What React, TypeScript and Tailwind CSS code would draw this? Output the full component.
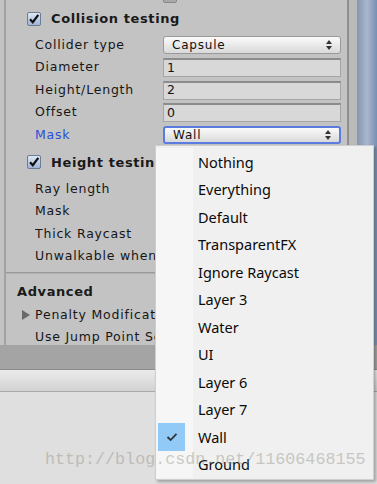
import React from "react";

const UI = { fontFamily: '"DejaVu Sans", Verdana, sans-serif' };

function Arrows() {
  return (
    <svg width="6" height="10" viewBox="0 0 6 10" className="shrink-0">
      <polygon points="3,0 6,4 0,4" fill="#333" />
      <polygon points="0,6 6,6 3,10" fill="#333" />
    </svg>
  );
}

function Check() {
  return (
    <div className="w-[14px] h-[14px] shrink-0 rounded-[2px] border border-[#6d7c96] bg-gradient-to-b from-[#dfe8f6] to-[#9fb3d6] flex items-center justify-center">
      <svg width="12" height="12" viewBox="0 0 12 12">
        <path d="M2 6.2 L4.8 9.2 L10.3 1.8" stroke="#111" strokeWidth="2.2" fill="none" strokeLinejoin="miter" />
      </svg>
    </div>
  );
}

function Dropdown({ value, focus }: { value: string; focus?: boolean }) {
  return (
    <div
      className={
        "w-[178px] h-[18px] rounded-[3px] flex items-center justify-between pl-[8px] pr-[8px] bg-gradient-to-b from-[#fbfbfb] to-[#d9d9d9] text-[12px] text-[#111] " +
        (focus ? "border-2 border-[#5a7be0]" : "border border-[#9a9a9a]")
      }
    >
      <span className="tracking-[0.8px]">{value}</span>
      <Arrows />
    </div>
  );
}

function Field({ value }: { value: string }) {
  return (
    <div className="w-[178px] h-[19px] border border-[#a5a5a5] border-t-[#8c8c8c] border-t-2 bg-[#d8d8d8] flex items-center pl-[3px] text-[12.5px] text-[#111]">
      {value}
    </div>
  );
}

function Row({ label, blue, children }: { label: string; blue?: boolean; children?: React.ReactNode }) {
  return (
    <div className="h-[22.5px] flex items-center pl-[29px]">
      <div
        className={
          "w-[128px] shrink-0 whitespace-nowrap overflow-hidden text-[12.5px] tracking-[0.8px] " +
          (blue ? "text-[#2750d8]" : "text-[#161616]")
        }
      >
        {label}
      </div>
      {children}
    </div>
  );
}

function SmallBox() {
  return <div className="w-[14px] h-[14px] rounded-[2px] border border-[#888] bg-gradient-to-b from-[#f0f0f0] to-[#cfcfcf]" />;
}

const items = [
  "Nothing",
  "Everything",
  "Default",
  "TransparentFX",
  "Ignore Raycast",
  "Layer 3",
  "Water",
  "UI",
  "Layer 6",
  "Layer 7",
  "Wall",
  "Ground",
];

export default function App() {
  return (
    <div className="relative w-[377px] h-[484px] overflow-hidden bg-[#dfdfdf]" style={UI}>
      <div className="flex flex-col h-full">
        {/* inspector section */}
        <div className="h-[345px] flex shrink-0">
          <div className="w-[347px] h-full bg-[#c3c3c3] pl-[4px] flex">
            <div className="flex-1 h-full border-l-2 border-[#a3a3a3] overflow-hidden">
              {/* partially visible row */}
              <div className="h-[3px] overflow-hidden flex items-end pl-[157px]">
                <div className="w-[14px] h-[14px] shrink-0 rounded-[2px] border border-[#888] bg-[#a9a9a9]" />
              </div>
              <div className="h-[31px] flex items-center pl-[21px] gap-[10px]">
                <Check />
                <span className="font-bold text-[13px] tracking-[0.6px] text-[#1a1a1a] whitespace-nowrap">Collision testing</span>
              </div>
              <Row label="Collider type">
                <Dropdown value="Capsule" />
              </Row>
              <Row label="Diameter">
                <Field value="1" />
              </Row>
              <Row label="Height/Length">
                <Field value="2" />
              </Row>
              <Row label="Offset">
                <Field value="0" />
              </Row>
              <Row label="Mask" blue>
                <Dropdown value="Wall" focus />
              </Row>
              <div className="h-[31.5px] flex items-center pl-[21px] gap-[10px]">
                <Check />
                <span className="font-bold text-[13px] tracking-[0.6px] text-[#1a1a1a] whitespace-nowrap">Height testing</span>
              </div>
              <Row label="Ray length">
                <Field value="" />
              </Row>
              <Row label="Mask">
                <Dropdown value="" />
              </Row>
              <Row label="Thick Raycast">
                <SmallBox />
              </Row>
              <Row label="Unwalkable when no ground">
                <SmallBox />
              </Row>
              <div className="h-[3.5px]" />
              <div className="h-[2px] bg-[#9a9a9a] border-b border-[#b0b0b0]" />
              <div className="h-[6.5px]" />
              <div className="h-[24px] flex items-center pl-[11px]">
                <span className="font-bold text-[13px] tracking-[0.6px] text-[#1a1a1a]">Advanced</span>
              </div>
              <div className="h-[22.5px] flex items-center pl-[16px] gap-[5px]">
                <svg width="8" height="10" viewBox="0 0 8 10" className="shrink-0">
                  <polygon points="0,0 8,5 0,10" fill="#6a6a6a" />
                </svg>
                <span className="text-[12.5px] tracking-[0.8px] text-[#161616] whitespace-nowrap">Penalty Modifications</span>
              </div>
              <div className="h-[22.5px] flex items-center pl-[29px]">
                <span className="text-[12.5px] tracking-[0.8px] text-[#161616] whitespace-nowrap">Use Jump Point Search</span>
              </div>
            </div>
          </div>
          <div className="w-[2px] h-full bg-[#8e8e8e]" />
          <div className="w-[8px] h-full bg-[#bababa]" />
          <div className="flex-1 h-full bg-gradient-to-r from-[#8596b3] via-[#aab8cc] to-[#7890b2]" />
        </div>
        {/* bands */}
        <div className="h-[25px] shrink-0 bg-[#a4a4a4] border-b border-[#8c8c8c]" />
        <div className="h-[22px] shrink-0 bg-gradient-to-b from-[#ebebeb] to-[#d2d2d2] border-b border-[#a9a9a9]" />
        <div className="flex-1 bg-[#dfdfdf]" />
      </div>

      {/* popup menu */}
      <div
        className="absolute left-[155px] top-[145px] w-[219px] h-[335px] bg-[#f0f0f0] border border-[#cfcfcf] shadow-[2px_2px_3px_rgba(0,0,0,0.28)] pt-[2px] flex"
        style={{ fontFamily: '"Noto Sans", "Open Sans", sans-serif' }}
      >
        <div className="w-full flex flex-col relative">
          {items.map((it) => (
            <div key={it} className="h-[27.5px] flex items-center shrink-0">
              <div className="w-[37px] h-full pl-[2px] shrink-0 flex items-stretch bg-[#f6f6f6]">
                {it === "Wall" ? (
                  <div className="w-[27px] h-full bg-[#91c9f7] flex items-center justify-center">
                    <svg width="12" height="10" viewBox="0 0 12 10">
                      <path d="M1.5 5 L4.6 8 L10.5 1.8" stroke="#333" strokeWidth="1.8" fill="none" />
                    </svg>
                  </div>
                ) : null}
              </div>
              <span className="pl-[5px] text-[14.5px] text-[#0a0a0a] whitespace-nowrap leading-none">{it}</span>
            </div>
          ))}
        </div>
      </div>

      {/* watermark */}
      <div
        className="absolute left-[45px] top-[452px] text-[16.7px] leading-none text-[#8a8a80] opacity-40 whitespace-nowrap pointer-events-none"
        style={{ fontFamily: '"Liberation Mono", monospace' }}
      >
        http://blog.csdn.net/11606468155
      </div>
    </div>
  );
}
